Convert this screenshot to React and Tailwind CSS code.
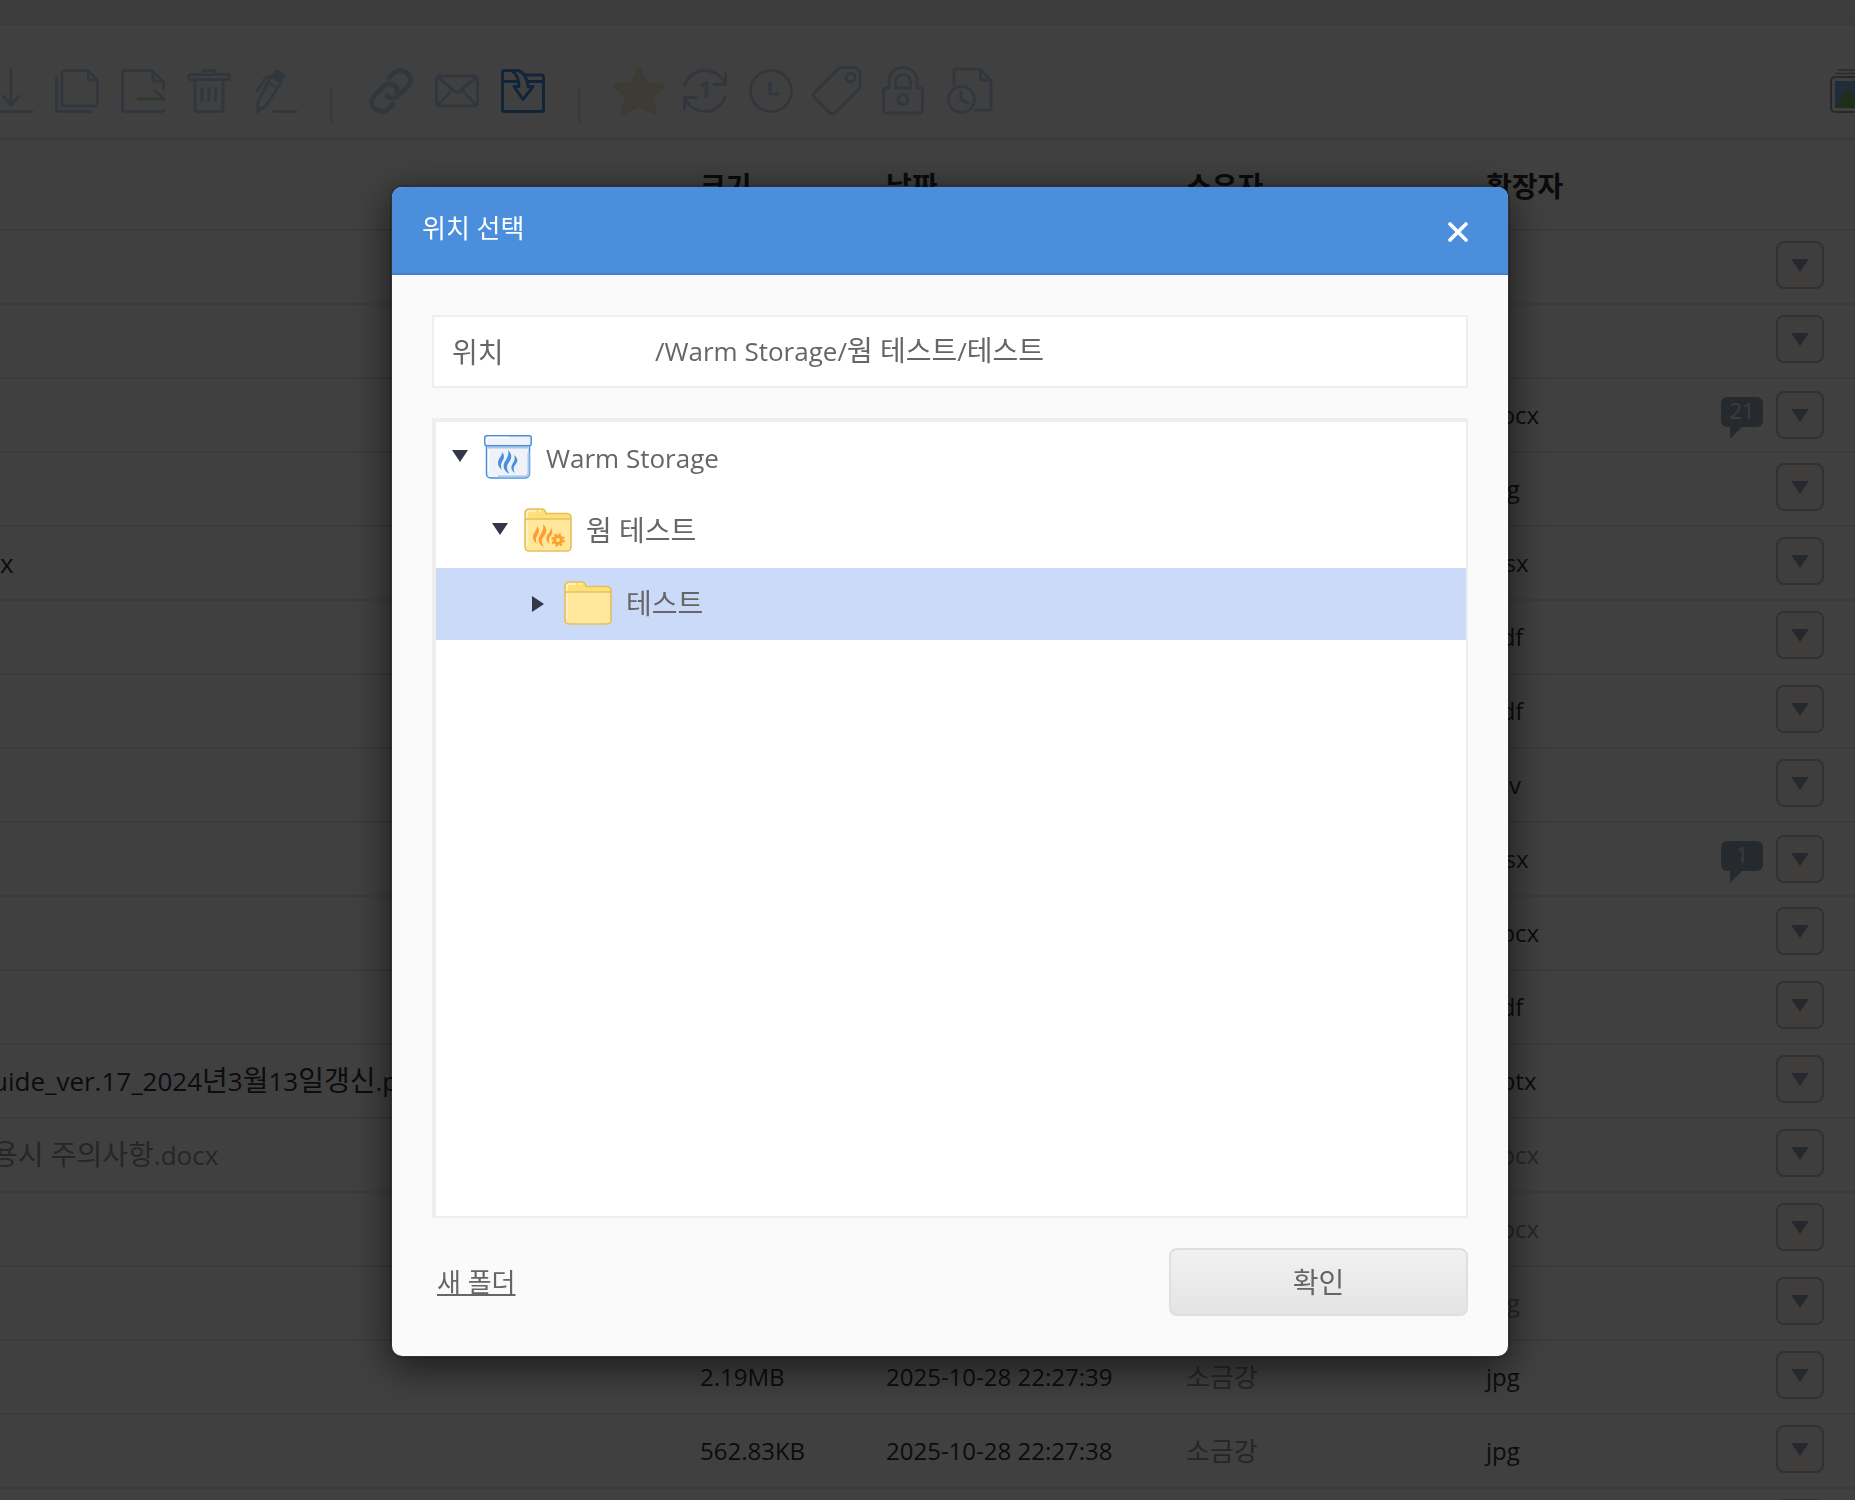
import React, { useState } from 'react';

const files = [
    { id: 1 },
    { id: 2 },
    { id: 3, ext: 'docx', comments: 21 },
    { id: 4, ext: 'jpg' },
    { id: 5, name: ['x'], ext: 'xlsx' },
    { id: 6, ext: 'pdf' },
    { id: 7, ext: 'pdf' },
    { id: 8, ext: 'csv' },
    { id: 9, ext: 'xlsx', comments: 1 },
    { id: 10, ext: 'docx' },
    { id: 11, ext: 'pdf' },
    { id: 12, name: ['uide_ver.17_2024', '년', '3', '월', '13', '일갱신', '.pptx'], ext: 'pptx' },
    { id: 13, name: ['', '용시 주의사항', '.docx'], ext: 'docx', muted: true },
    { id: 14, ext: 'docx', muted: true },
    { id: 15, ext: 'jpg', muted: true },
    { id: 16, size: '2.19MB', date: '2025-10-28 22:27:39', owner: '소금강', ext: 'jpg' },
    { id: 17, size: '562.83KB', date: '2025-10-28 22:27:38', owner: '소금강', ext: 'jpg' },
    { id: 18 },
];

const tree = [
    { id: 'root', label: ['Warm Storage'], indent: 'pl-4', open: true, icon: 'storage' },
    { id: 'warm', label: ['', '웜 테스트'], indent: 'pl-14', open: true, icon: 'warm' },
    { id: 'test', label: ['', '테스트'], indent: 'pl-24', open: false, icon: 'folder' },
];

// parts alternate latin / hangul, hangul is set a little larger
const MixedText = ({ parts }) =>
    parts.map((part, i) => (i % 2 ? <span key={i} className="text-[28px] leading-none">{part}</span> : part));

const ToolIcon = ({ children, className = 'opacity-30' }) => (
    <svg
        viewBox="0 0 52 52"
        fill="none"
        stroke="#4a8edc"
        strokeWidth="3"
        strokeLinecap="round"
        strokeLinejoin="round"
        aria-hidden="true"
        className={`w-[52px] h-[52px] ${className}`}
    >
        {children}
    </svg>
);

const fileTools = [
    {
        label: '다운로드',
        icon: (
            <ToolIcon>
                <path d="M26 5v34M18 31l8 9 8-9M5 46.500h42" />
            </ToolIcon>
        ),
    },
    {
        label: '복사',
        icon: (
            <ToolIcon>
                <path d="M13 5.500h24l9.500 9.500v24a2 2 0 0 1-2 2H13a2 2 0 0 1-2-2v-31.500a2 2 0 0 1 2-2z" />
                <path d="M37.500 6v7a2 2 0 0 0 2 2h7" />
                <path d="M5.500 13v31.500a2 2 0 0 0 2 2H40" />
            </ToolIcon>
        ),
    },
    {
        label: '이동',
        icon: (
            <ToolIcon>
                <path d="M46.500 24v-7L35 5.500H7.500a2 2 0 0 0-2 2v37a2 2 0 0 0 2 2h37a2 2 0 0 0 2-2" />
                <path d="M36 6v10h10" />
                <path d="M21 34h26l-9-8" stroke="#3f9a3f" />
            </ToolIcon>
        ),
    },
    {
        label: '삭제',
        icon: (
            <ToolIcon>
                <path d="M20 9.500v-2a2 2 0 0 1 2-2h8a2 2 0 0 1 2 2v2" />
                <rect x="5.500" y="9.500" width="41" height="5" rx="2.500" />
                <path d="M12 15v29.500a2 2 0 0 0 2 2h24a2 2 0 0 0 2-2V15M19 23.500v12M26 23.500v12M32.500 23.500v12" />
            </ToolIcon>
        ),
    },
    {
        label: '이름 변경',
        icon: (
            <ToolIcon>
                <path d="M22 11l10 7-16 24-5 2-3 3 1-5-.5-4z" />
                <path d="M25 10l3-4 7 4-4 7z" fill="#4a8edc" />
                <path d="M20 18l8 5M8 26l9-14 5 1M25 46.500h22" />
            </ToolIcon>
        ),
    },
];

const shareTools = [
    {
        label: '링크',
        icon: (
            <ToolIcon>
                <g strokeWidth="5">
                    <path d="M24 13l5-5c9-8 22 4 14 13L33 31c-3 3-8 3-11 0" />
                    <path d="M28 39l-5 5c-8 8-22-4-14-13l10-10c3-3 8-3 11 0 2 2 3 4 2 6" />
                </g>
            </ToolIcon>
        ),
    },
    {
        label: '메일',
        icon: (
            <ToolIcon>
                <rect x="5.500" y="11" width="41" height="30" rx="3" />
                <path d="M7 12l16 14q3 3 6 0l16-14M7 40l13-14M45 40L32 26" />
            </ToolIcon>
        ),
    },
    {
        label: '보관',
        icon: (
            <ToolIcon className="opacity-100">
                <path d="M14 5.500H7.500a2 2 0 0 0-2 2v37a2 2 0 0 0 2 2h37a2 2 0 0 0 2-2V12a2 2 0 0 0-2-2H27M5.500 16.500H20M31 16.500h15" />
                <path d="M14 5.500h6c7 1 10 7 11 16h5l-10 13-9-13h5c0-7-2-13-8-16z" />
            </ToolIcon>
        ),
    },
];

const markTools = [
    {
        label: '즐겨찾기',
        icon: (
            <ToolIcon className="opacity-25">
                <path
                    d="M26 3.500c1 0 1.500 1 2 2L33 18l15 1.500c2 .2 3 1.500 1.500 3L39 32l3.500 14c.5 2-.5 3-2.500 2l-14-7-14 7c-2 1-3 0-2.500-2L13 32 2.500 22.500C1 21 2 19.700 4 19.500L19 18l5-12.500c.5-1 1-2 2-2z"
                    fill="#e6b450"
                    stroke="#c8962c"
                    strokeWidth="2"
                />
            </ToolIcon>
        ),
    },
    {
        label: '버전',
        icon: (
            <ToolIcon>
                <path d="M6 20C12 2 36 0 46 18M46.500 8v11.500H35M46 32C40 50 16 52 6 34M5.500 44V32.500H17" />
                <text x="26" y="33" textAnchor="middle" fontSize="23" fontWeight="700" fontFamily="Open Sans" fill="#4a8edc" stroke="none">1</text>
            </ToolIcon>
        ),
    },
    {
        label: '기록',
        icon: (
            <ToolIcon>
                <circle cx="26" cy="26" r="20.500" />
                <path d="M25 18v11h8" />
            </ToolIcon>
        ),
    },
    {
        label: '태그',
        icon: (
            <ToolIcon>
                <path d="M31 2.500h12a6 6 0 0 1 6 6V20q0 3-2 5L24 48q-2.500 2-5 0L4 33q-3-3 0-6L26 5q2-2.500 5-2.500z" />
                <circle cx="39.500" cy="12.500" r="4.500" />
            </ToolIcon>
        ),
    },
    {
        label: '잠금',
        icon: (
            <ToolIcon>
                <path d="M12 23V16C12 -2 40 -2 40 16v7h3a2.500 2.500 0 0 1 2.500 2.500V45a3 3 0 0 1-3 3h-33a3 3 0 0 1-3-3V25.500A2.500 2.500 0 0 1 9 23z" />
                <path d="M18.500 23v-6c0-10 15-10 15 0v6z" />
                <circle cx="26" cy="34.500" r="5" />
            </ToolIcon>
        ),
    },
    {
        label: '만료',
        icon: (
            <ToolIcon>
                <path d="M11 19V6a2 2 0 0 1 2-2h24l11 12v27a2 2 0 0 1-2 2H32" />
                <path d="M37.500 5v8a2 2 0 0 0 2 2h8" />
                <circle cx="18.500" cy="34.500" r="13" />
                <path d="M18 27v8l7 3" />
            </ToolIcon>
        ),
    },
];

const ToolGroup = ({ tools }) => (
    <div className="flex shrink-0">
        {tools.map((tool) => (
            <button key={tool.label} type="button" aria-label={tool.label} className="flex w-[66px] justify-center">
                {tool.icon}
            </button>
        ))}
    </div>
);

const ToolDivider = () => <div className="mt-[22px] ml-[22px] mr-[26px] h-9 w-0.5 shrink-0 bg-[#e4e4e4]" />;

const GalleryIcon = () => (
    <svg viewBox="0 0 52 52" fill="none" aria-hidden="true" className="h-[52px] w-[52px]">
        <path d="M12 5h28M9 8.500h34" stroke="#a8a8b0" strokeWidth="1.500" />
        <rect x="5" y="12" width="42" height="35" rx="4" stroke="#a0a0a8" strokeWidth="2" />
        <path d="M9 16h34v27H9z" fill="#7eb4e0" />
        <path d="M9 43l13-19 13 19z" fill="#7db56b" />
    </svg>
);

const CommentBadge = ({ count }) => (
    <div className="relative mr-[13px] h-[30px] w-[42px] rounded-md bg-[#98a8bc] text-center text-[22px] leading-[26px] text-[#eeeeee]">
        {count}
        <svg viewBox="0 0 12 12" aria-hidden="true" className="absolute top-[30px] left-[9px] h-3 w-3 fill-[#98a8bc]">
            <path d="M0 0h12L0 12z" />
        </svg>
    </div>
);

const FileRow = ({ file }) => {
    const tone = file.muted ? 'text-[#999999]' : 'text-[#333340]';
    return (
        <tr className="h-[74px] border-b-2 border-[#ebebeb]">
            <td className={`text-[26px] whitespace-nowrap ${tone}`}>
                {file.name && (
                    <span className={file.name.length > 1 ? '-ml-2' : ''}>
                        <MixedText parts={file.name} />
                    </span>
                )}
            </td>
            <td className={tone}>{file.size}</td>
            <td className={tone}>{file.date}</td>
            <td className="text-[26px] text-[#999999]">{file.owner}</td>
            <td className={tone}>{file.ext}</td>
            <td>
                <div className={file.comments ? 'flex justify-end pr-[31px]' : 'flex justify-end pr-[31px] pb-1'}>
                    <div className="flex items-start">
                        {file.comments && (
                            <div className="pt-1.5">
                                <CommentBadge count={file.comments} />
                            </div>
                        )}
                        <button
                            type="button"
                            aria-label="메뉴"
                            className="flex h-12 w-12 items-center justify-center rounded-lg border-2 border-[#bcc2ca] bg-[#faf7f0]"
                        >
                            <svg viewBox="0 0 18 13" aria-hidden="true" className="h-[13px] w-[18px] fill-[#94a3b5]">
                                <path d="M0 0h18L9 13z" />
                            </svg>
                        </button>
                    </div>
                </div>
            </td>
        </tr>
    );
};

const FileTable = () => (
    <table className="w-full table-fixed border-collapse text-left text-2xl">
        <colgroup>
            <col />
            <col className="w-[186px]" />
            <col className="w-[300px]" />
            <col className="w-[300px]" />
            <col className="w-[160px]" />
            <col className="w-[209px]" />
        </colgroup>
        <thead>
            <tr className="h-[89px] border-b-2 border-[#ebebeb] text-[28px] text-[#2b2b2b]">
                <th scope="col" aria-label="이름" />
                <th scope="col" className="pt-1">크기</th>
                <th scope="col" className="pt-1">날짜</th>
                <th scope="col" className="pt-1">소유자</th>
                <th scope="col" className="pt-1">확장자</th>
                <th scope="col" aria-label="메뉴" />
            </tr>
        </thead>
        <tbody>
            {files.map((file) => (
                <FileRow key={file.id} file={file} />
            ))}
        </tbody>
    </table>
);

const StorageIcon = () => (
    <svg viewBox="0 0 48 44" fill="none" aria-hidden="true" className="mb-0.5 h-11 w-12">
        <path d="M2.500 10h43v29a4 4 0 0 1-4 4h-35a4 4 0 0 1-4-4z" fill="#eff3f9" stroke="#4a8edc" strokeWidth="1.500" />
        <path d="M4 12.500h40M44.500 18v20q0 3.500-3.500 3.500H14" stroke="#a9c8ea" strokeWidth="2" />
        <rect x="0.800" y="0.800" width="46.400" height="10" rx="2" fill="#eff3f9" stroke="#4a8edc" strokeWidth="1.500" />
        <path d="M2.500 8V4.500q0-2 2-2H25M4.500 15v22" stroke="#ffffff" strokeWidth="1.500" />
        <g fill="#4a8edc">
            <path d="M18 17c5 6-1 9-1 13 0 2 0 3 1 5-4-3-5-7-3-11 2-3 3-4 3-7z" />
            <path d="M24 15c8 8-1 12-1 17 0 3 1 4 2 7-6-4-7-9-3-14 2-4 3-6 2-10z" />
            <path d="M30 20c7 6 1 9 0 12-1 2 0 4 1 6-5-3-4-7-2-10 2-3 2-5 1-8z" />
        </g>
    </svg>
);

const FolderIcon = ({ warm }) => (
    <svg viewBox="0 0 48 44" fill="none" aria-hidden="true" className="mb-0.5 h-11 w-12">
        <path
            d="M1 5a4 4 0 0 1 4-4h13q3 0 4 4.500H43a4 4 0 0 1 4 4V39a4 4 0 0 1-4 4H5a4 4 0 0 1-4-4z"
            fill="#ffe89c"
        />
        <path d="M1 11V5a4 4 0 0 1 4-4h13q3 0 4 4.500H43a4 4 0 0 1 4 4V11z" fill="#fde07a" />
        <path d="M3 10V6q0-3 3-3h6M15 3h2M3 13v25" stroke="#fff6d2" strokeWidth="1.500" />
        <path
            d="M1 5a4 4 0 0 1 4-4h13q3 0 4 4.500H43a4 4 0 0 1 4 4V39a4 4 0 0 1-4 4H5a4 4 0 0 1-4-4zM1 11h46"
            stroke="#e6be5c"
            strokeWidth="1.600"
        />
        {warm && (
            <g fill="#ff9d2e">
                <path d="M13 18c5 6-1 9-1 13 0 2 0 3 1 5-4-3-5-7-3-11 2-3 3-4 3-7z" />
                <path d="M19 16c8 8-1 12-1 17 0 3 1 4 2 6-6-3-7-8-3-13 2-4 3-6 2-10z" />
                <path d="M27 20c4 6-2 8-2 11 0 2 0 3 1 5-5-3-4-7-2-10 2-2 3-4 3-6z" />
                <g fill="none" stroke="#ff9d2e">
                    <circle cx="34" cy="32" r="3.500" strokeWidth="3" />
                    <circle cx="34" cy="32" r="5.700" strokeWidth="2" strokeDasharray="2.400 2.076" />
                </g>
            </g>
        )}
    </svg>
);

const TreeRow = ({ node, selected, onSelect }) => (
    <li role="treeitem" aria-expanded={node.open} aria-selected={selected} className="mb-px">
        <button
            type="button"
            onClick={onSelect}
            className={`flex h-[72px] w-full items-center text-left ${node.indent} ${selected ? 'bg-[#cbdaf9]' : ''}`}
        >
            <span className="w-8 shrink-0">
                {node.open ? (
                    <svg viewBox="0 0 16 12" aria-hidden="true" className="mb-1 h-3 w-4 fill-[#34364a]">
                        <path d="M0 0h16L8 12z" />
                    </svg>
                ) : (
                    <svg viewBox="0 0 12 16" aria-hidden="true" className="h-4 w-3 fill-[#34364a]">
                        <path d="M0 0v16l12-8z" />
                    </svg>
                )}
            </span>
            {node.icon === 'storage' ? <StorageIcon /> : <FolderIcon warm={node.icon === 'warm'} />}
            <span className="ml-3.5">
                <MixedText parts={node.label} />
            </span>
        </button>
    </li>
);

const LocationDialog = () => {
    const [selected, setSelected] = useState('test');

    return (
        <div
            role="dialog"
            aria-labelledby="dialog-title"
            className="w-full max-w-[1120px] rounded-xl border-2 border-black/20 bg-[#fafafa] bg-clip-padding text-[26px] text-[#666666] shadow-[0_10px_40px_rgba(0,0,0,0.6)]"
        >
            <header className="flex h-[88px] items-center justify-between rounded-t-[10px] border-b-2 border-[#4080cc] bg-[#4a8edc] pr-10 pl-[30px] text-white">
                <h2 id="dialog-title" className="pb-1 text-[26px]">위치 선택</h2>
                <button type="button" aria-label="닫기" className="pt-1">
                    <svg viewBox="0 0 20 20" aria-hidden="true" className="h-5 w-5" stroke="#ffffff" strokeWidth="3.600" strokeLinecap="round">
                        <path d="M2 2l16 16M18 2L2 18" />
                    </svg>
                </button>
            </header>
            <div className="p-10">
                <dl className="flex h-[73px] items-center border-2 border-[#eeeeee] bg-white px-[18px]">
                    <dt className="w-[203px] shrink-0 text-[28px]">위치</dt>
                    <dd>
                        <MixedText parts={['/Warm Storage/', '웜 테스트', '/', '테스트']} />
                    </dd>
                </dl>
                <ul role="tree" className="mt-[30px] min-h-[800px] border-2 border-t-4 border-l-4 border-[#eeeeee] bg-white">
                    {tree.map((node) => (
                        <TreeRow
                            key={node.id}
                            node={node}
                            selected={selected === node.id}
                            onSelect={() => setSelected(node.id)}
                        />
                    ))}
                </ul>
                <div className="mt-[30px] flex items-center justify-between pl-[5px]">
                    <a href="#new-folder" className="text-[26px] underline decoration-2 underline-offset-2">새 폴더</a>
                    <button
                        type="button"
                        className="h-[68px] w-[299px] rounded-lg border-2 border-[#dfdfdf] bg-gradient-to-b from-[#f1f1f1] to-[#e4e4e4] text-[28px]"
                    >
                        확인
                    </button>
                </div>
            </div>
        </div>
    );
};

const App = () => (
    <div className="h-screen overflow-hidden bg-white font-['Open_Sans','Noto_Sans_CJK_KR',sans-serif]">
        <div className="h-[25px] border-b-2 border-[#ebebeb] bg-[#f3f3f3]" />
        <div className="flex h-[116px] items-start border-b-4 border-[#ebebeb] pt-10">
            <div className="-ml-[22px] flex items-start">
                <ToolGroup tools={fileTools} />
                <ToolDivider />
                <ToolGroup tools={shareTools} />
                <ToolDivider />
                <ToolGroup tools={markTools} />
            </div>
            <button type="button" aria-label="보기" className="-mr-[23px] ml-auto shrink-0">
                <GalleryIcon />
            </button>
        </div>
        <FileTable />
        <div className="fixed inset-0 flex items-start justify-center bg-black/75 pt-[185px] pl-[45px]">
            <LocationDialog />
        </div>
    </div>
);

export default App;
